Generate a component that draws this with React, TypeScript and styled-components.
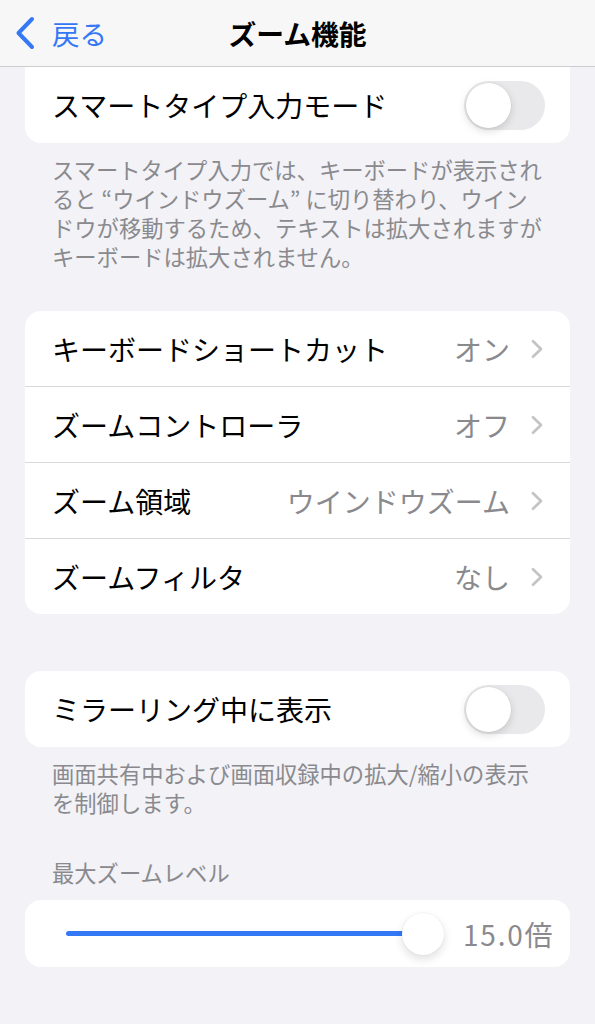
import React from "react";
import styled, { createGlobalStyle } from "styled-components";

const GlobalStyle = createGlobalStyle`
  html, body {
    margin: 0;
    padding: 0;
    background: #f2f2f7;
  }
  body {
    font-family: "Noto Sans CJK JP", "Noto Sans", sans-serif;
    -webkit-font-smoothing: antialiased;
  }
`;

const Screen = styled.div`
  width: 595px;
  height: 1024px;
  background: #f2f2f7;
  display: flex;
  flex-direction: column;
  overflow: hidden;
`;

const NavBar = styled.header`
  height: 66px;
  flex-shrink: 0;
  background: #f7f7f7;
  border-bottom: 1px solid #cdcdd0;
  display: grid;
  grid-template-columns: 1fr auto 1fr;
  align-items: center;
`;

const BackButton = styled.div`
  display: flex;
  align-items: center;
  gap: 16px;
  padding-left: 14px;
  color: #3478f6;
  font-size: 27.5px;
  line-height: 34px;
`;

const Title = styled.h1`
  margin: 0;
  font-size: 27.8px;
  line-height: 34px;
  font-weight: 700;
  color: #000;
`;

const Content = styled.main`
  display: flex;
  flex-direction: column;
  padding: 0 25px 0 25px;
`;

const Card = styled.section<{ $top?: number; $clipped?: boolean }>`
  background: #fff;
  border-radius: ${(p) => (p.$clipped ? "0 0 16px 16px" : "16px")};
  margin-top: ${(p) => p.$top ?? 0}px;
  display: flex;
  flex-direction: column;
  overflow: hidden;
`;

const Row = styled.div<{ $height?: number }>`
  height: ${(p) => p.$height ?? 75}px;
  display: flex;
  align-items: center;
  padding: 0 27px 0 27px;
  & + & {
    border-top: 1px solid #d9d9dc;
  }
`;

const ToggleRow = styled(Row)`
  padding-right: 25px;
`;

const Label = styled.span`
  flex: 1;
  font-size: 28px;
  line-height: 34px;
  color: #000;
  white-space: nowrap;
`;

const Value = styled.span`
  font-size: 28px;
  line-height: 34px;
  color: #8a8a8e;
  white-space: nowrap;
  margin-right: 21px;
`;

const Toggle = styled.div`
  width: 81px;
  height: 49px;
  border-radius: 25px;
  background: #e9e9eb;
  display: flex;
  align-items: center;
  padding: 2px;
  box-sizing: border-box;
`;

const Knob = styled.div`
  width: 45px;
  height: 45px;
  border-radius: 50%;
  background: #fff;
  box-shadow: 0 3px 8px rgba(0, 0, 0, 0.15), 0 0 0 0.5px rgba(0, 0, 0, 0.05);
`;

const Footer = styled.p<{ $top?: number }>`
  margin: ${(p) => p.$top ?? 12}px 0 0 0;
  padding: 0 20px 0 27px;
  font-size: 22.3px;
  line-height: 29px;
  color: #8a8a8e;
  white-space: nowrap;
`;

const SectionHeader = styled.h2<{ $top?: number }>`
  margin: ${(p) => p.$top ?? 0}px 0 14px 0;
  padding-left: 27px;
  font-size: 22.3px;
  line-height: 28px;
  font-weight: 400;
  color: #8a8a8e;
`;

const SliderRow = styled.div`
  height: 67px;
  display: flex;
  align-items: center;
  padding: 0 14px 0 41px;
`;

const SliderTrack = styled.div`
  position: relative;
  flex: 1;
  height: 42px;
  display: flex;
  align-items: center;
`;

const SliderFill = styled.div`
  height: 5px;
  border-radius: 3px;
  background: #3478f6;
  flex: 1;
  margin-right: 21px;
`;

const SliderThumb = styled.div`
  position: absolute;
  right: 0;
  top: 0;
  width: 42px;
  height: 42px;
  border-radius: 50%;
  background: #fff;
  box-shadow: 0 4px 10px rgba(0, 0, 0, 0.13), 0 0 0 0.5px rgba(0, 0, 0, 0.05);
`;

const SliderValue = styled.span`
  margin-left: 19px;
  width: 93px;
  font-size: 28px;
  line-height: 34px;
  color: #8a8a8e;
  letter-spacing: 1.8px;
  white-space: nowrap;
`;

const Chevron = () => (
  <svg width="12" height="20" viewBox="0 0 12 20" fill="none">
    <path
      d="M2 2.2 L10 10 L2 17.8"
      stroke="#c4c4c7"
      strokeWidth="2.7"
      strokeLinecap="round"
      strokeLinejoin="round"
    />
  </svg>
);

const BackChevron = () => (
  <svg width="22" height="34" viewBox="0 0 22 34" fill="none">
    <path
      d="M18 3 L4.5 17 L18 31"
      stroke="#3478f6"
      strokeWidth="4"
      strokeLinecap="round"
      strokeLinejoin="round"
    />
  </svg>
);

const Switch = () => (
  <Toggle>
    <Knob />
  </Toggle>
);

const links = [
  { label: "キーボードショートカット", value: "オン" },
  { label: "ズームコントローラ", value: "オフ" },
  { label: "ズーム領域", value: "ウインドウズーム" },
  { label: "ズームフィルタ", value: "なし" },
];

export default function App() {
  return (
    <>
      <GlobalStyle />
      <Screen>
        <NavBar>
          <BackButton>
            <BackChevron />
            <span>戻る</span>
          </BackButton>
          <Title>ズーム機能</Title>
          <div />
        </NavBar>
        <Content>
          <Card $clipped>
            <ToggleRow $height={76}>
              <Label>スマートタイプ入力モード</Label>
              <Switch />
            </ToggleRow>
          </Card>
          <Footer>
            スマートタイプ入力では、キーボードが表示され
            <br />
            ると “ウインドウズーム” に切り替わり、ウイン
            <br />
            ドウが移動するため、テキストは拡大されますが
            <br />
            キーボードは拡大されません。
          </Footer>

          <Card $top={40}>
            {links.map((l) => (
              <Row key={l.label}>
                <Label>{l.label}</Label>
                <Value>{l.value}</Value>
                <Chevron />
              </Row>
            ))}
          </Card>

          <Card $top={57}>
            <ToggleRow $height={76}>
              <Label>ミラーリング中に表示</Label>
              <Switch />
            </ToggleRow>
          </Card>
          <Footer $top={12}>
            画面共有中および画面収録中の拡大/縮小の表示
            <br />
            を制御します。
          </Footer>

          <SectionHeader $top={41}>最大ズームレベル</SectionHeader>
          <Card>
            <SliderRow>
              <SliderTrack>
                <SliderFill />
                <SliderThumb />
              </SliderTrack>
              <SliderValue>15.0倍</SliderValue>
            </SliderRow>
          </Card>
        </Content>
      </Screen>
    </>
  );
}
